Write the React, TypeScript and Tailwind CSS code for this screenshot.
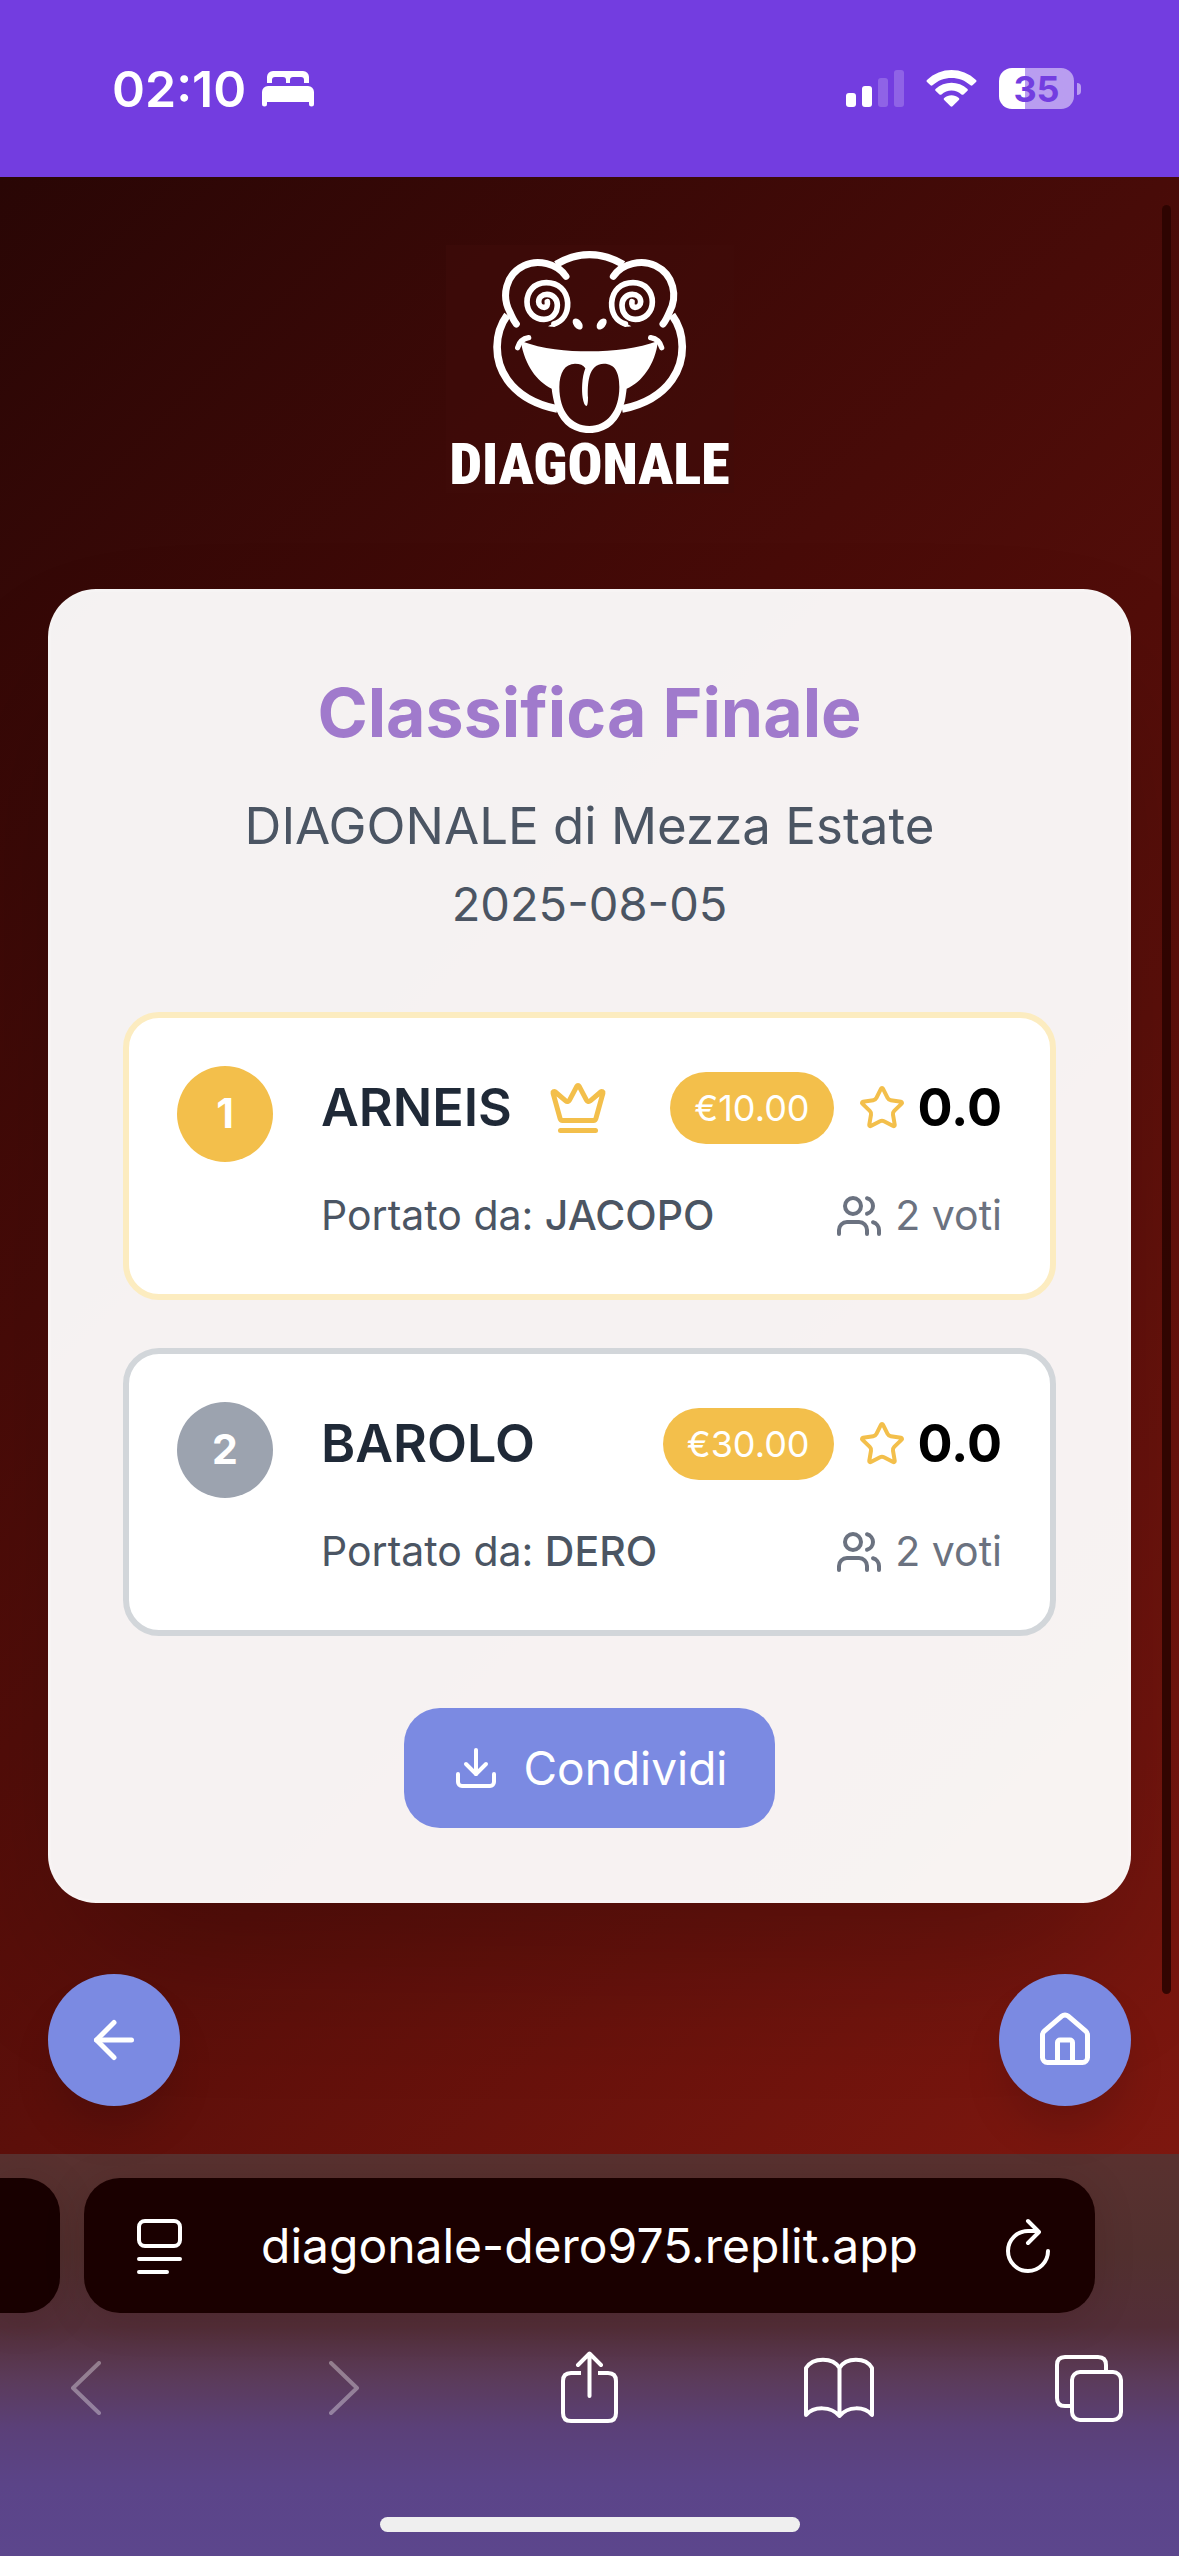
import React from "react";
import { ArrowLeft, Crown, Download, House, Star, Users } from "lucide-react";

type Entry = {
  rank: number;
  name: string;
  owner: string;
  price: string;
  score: string;
  votes: number;
  winner: boolean;
};

const entries: Entry[] = [
  { rank: 1, name: "ARNEIS", owner: "JACOPO", price: "€10.00", score: "0.0", votes: 2, winner: true },
  { rank: 2, name: "BAROLO", owner: "DERO", price: "€30.00", score: "0.0", votes: 2, winner: false },
];

function StatusBar() {
  return (
    <header className="flex h-[177px] shrink-0 items-center justify-between bg-[#733de0] pr-[98px] pl-28 text-white">
      <div className="flex items-center gap-4">
        <time className="text-[50px] leading-[60px] font-semibold">02:10</time>
        <svg className="h-9 w-13" viewBox="0 0 52 36" fill="currentColor" aria-label="Sonno">
          <path d="M5 12V6a6 6 0 0 1 6-6h30a6 6 0 0 1 6 6v6h-5V9a3 3 0 0 0-3-3H31a3 3 0 0 0-3 3v3h-4V9a3 3 0 0 0-3-3h-8a3 3 0 0 0-3 3v3z" />
          <path d="M0 33V21a6 6 0 0 1 6-6h40a6 6 0 0 1 6 6v12a2 2 0 0 1-5 0v-2H5v2a2 2 0 0 1-5 0z" />
        </svg>
      </div>
      <div className="flex items-center gap-[22px]">
        <svg className="h-[37px] w-[58px]" viewBox="0 0 58 37" fill="currentColor" aria-label="Segnale">
          <rect x="0" y="23" width="10" height="14" rx="3" />
          <rect x="16" y="16" width="10" height="21" rx="3" />
          <rect x="32" y="8" width="10" height="29" rx="3" opacity=".2" />
          <rect x="48" y="0" width="10" height="37" rx="3" opacity=".2" />
        </svg>
        <svg className="h-[37px] w-[51px]" viewBox="0 0 51 37" fill="currentColor" aria-label="Wi-Fi">
          <path d="M1 10C15-3.300 36-3.300 50 10Q51 11 50 12L46.500 15.300Q45.500 16 44.500 15.300C34 5.500 17 5.500 6.500 15.300Q5.500 16 4.500 15.300L1 12Q0 11 1 10Z" />
          <path d="M9.500 19C18.500 10.700 32.500 10.700 41.500 19Q42.300 20 41.500 20.800L37.500 24.500Q36.500 25.200 35.500 24.500C30 19.300 21 19.300 15.500 24.500Q14.500 25.200 13.500 24.500L9.500 20.800Q8.700 20 9.500 19Z" />
          <path d="M18.200 28C22.500 24.300 28.500 24.300 32.800 28Q33.800 29 32.800 30L26.500 36.300Q25.500 37.200 24.500 36.300L18.200 30Q17.200 29 18.200 28Z" />
        </svg>
        <div className="flex items-center gap-[3px]">
          <div className="flex h-[41px] w-[75px] items-center justify-center rounded-[13px] bg-linear-to-r from-white from-35% to-[#b99df0] to-35% text-[36px] leading-none font-bold text-[#733de0]">
            35
          </div>
          <div className="h-3 w-1 rounded-r-full bg-[#b99df0]" />
        </div>
      </div>
    </header>
  );
}

function FrogHalf() {
  return (
    <>
      <g fill="none" stroke="currentColor" strokeLinecap="round">
        <path d="M408 136C382 97 322 84 282 104C226 131 214 196 240 244Q250 268 259 279" strokeWidth="21" />
        <path d="M232 252C192 306 190 388 232 446C266 494 322 522 382 534" strokeWidth="23" strokeLinecap="butt" />
        <path
          d="M372 279C400 270 414 246 413 215C410 178 385 155 349 155C312 155 291 182 291 213C291 243 313 265 342 265C367 265 382 246 382 222C382 204 369 190 351 190C336 190 326 200 326 212C326 222 334 229 343 229C350 229 354 222 352 212"
          strokeWidth="17"
        />
        <path d="M263 350Q270 324 296 320" strokeWidth="16" />
      </g>
      <path d="M354 286Q372 278 384 266L392 276Q376 290 354 286Z" fill="currentColor" />
      <ellipse cx="443" cy="279" rx="12" ry="19" transform="rotate(-38 443 279)" fill="currentColor" />
    </>
  );
}

function Logo() {
  return (
    <div className="mx-auto flex h-[248px] w-72 flex-col items-center bg-[#400c09]/50 text-white">
      <svg className="w-full" viewBox="48 42 864 570" aria-hidden="true">
        <path d="M378 100Q478 42 580 100" fill="none" stroke="currentColor" strokeWidth="22" />
        <FrogHalf />
        <g transform="matrix(-1 0 0 1 958 0)">
          <FrogHalf />
        </g>
        <path
          fill="currentColor"
          fillRule="evenodd"
          d="M272 330C340 355 410 361 478 361C550 361 625 352 684 330C676 400 635 455 590 473C587 498 585 512 580 525C565 575 530 606 478 606C425 606 390 575 375 525C370 505 367 490 365 473C320 450 285 405 272 330ZM388 468C388 425 405 398 435 398C450 398 460 402 466 412C455 440 455 480 458 500Q462 525 470 525Q474 520 474 500C472 460 474 398 522 398C555 398 568 425 568 468C568 540 530 585 478 585C425 585 388 540 388 468Z"
        />
      </svg>
      <span className="font-['Roboto_Condensed','Liberation_Sans_Narrow',Roboto,sans-serif] text-[58px] leading-[58px] font-black">
        DIAGONALE
      </span>
    </div>
  );
}

function EntryCard({ entry }: { entry: Entry }) {
  return (
    <li
      className={`flex items-start gap-12 rounded-[36px] border-6 bg-white p-12 ${
        entry.winner ? "border-[#fcecc0]" : "border-[#d2d6da]"
      }`}
    >
      <div
        className={`flex size-24 shrink-0 items-center justify-center rounded-full text-[41px] font-bold text-white ${
          entry.winner ? "bg-[#f3bf4b]" : "bg-[#9ca3af]"
        }`}
      >
        {entry.rank}
      </div>
      <div className="flex min-w-0 flex-1 flex-col gap-9">
        <div className="flex h-[84px] items-center justify-between">
          <div className="flex items-center gap-9">
            <h3 className="text-[52px] font-semibold text-[#1f2937]">{entry.name}</h3>
            {entry.winner && <Crown className="size-15 text-[#f3bf4b]" />}
          </div>
          <div className="flex items-center gap-6">
            <span className="rounded-full bg-[#f3bf4b] px-6 text-[36px] leading-[72px] text-white">{entry.price}</span>
            <div className="flex items-center gap-3">
              <Star className="size-12 text-[#f3bf4b]" />
              <span className="text-[52px] font-bold text-black">{entry.score}</span>
            </div>
          </div>
        </div>
        <div className="flex h-15 items-center justify-between text-[41px] text-[#4b5563]">
          <p>
            Portato da: <span className="font-medium">{entry.owner}</span>
          </p>
          <div className="flex items-center gap-3 text-[#6b7280]">
            <Users className="size-12" />
            <span>{entry.votes} voti</span>
          </div>
        </div>
      </div>
    </li>
  );
}

const roundButton =
  "flex size-[132px] items-center justify-center rounded-full bg-[#7b8ae2] text-white shadow-[0_30px_45px_-9px_rgba(0,0,0,0.15)]";

const toolButton = "size-18";

function BrowserBar() {
  const line = {
    className: "size-full",
    viewBox: "0 0 72 72",
    fill: "none",
    stroke: "currentColor",
    strokeWidth: 4,
    strokeLinecap: "round" as const,
    strokeLinejoin: "round" as const,
  };
  return (
    <footer className="flex shrink-0 flex-col bg-[linear-gradient(180deg,#59312f_0%,#52302f_25%,#532e38_43%,#5b3b5a_56%,#5b4078_68%,#5b4488_82%,#5c468d_100%)] pt-6 pb-6 text-white">
      <div className="flex h-[135px] gap-6 pr-[84px]">
        <div className="w-15 rounded-r-[36px] bg-[#180000] shadow-[0_6px_40px_rgba(40,0,10,0.15)]" />
        <div className="flex flex-1 items-center justify-between rounded-[36px] bg-[#1a0000] pr-[43px] pl-[52px] shadow-[0_6px_40px_rgba(40,0,10,0.15)]">
          <button aria-label="Opzioni pagina">
            <svg className="h-14 w-12" viewBox="0 0 48 56" fill="none" stroke="currentColor" strokeWidth="4" strokeLinecap="round">
              <rect x="3" y="3" width="41" height="25" rx="6" />
              <path d="M3 41H44M3 54H31" />
            </svg>
          </button>
          <input
            className="w-0 flex-1 bg-transparent text-center text-[48px] leading-[60px] outline-none"
            type="text"
            aria-label="Indirizzo"
            defaultValue="diagonale-dero975.replit.app"
          />
          <button aria-label="Ricarica">
            <svg className="h-14 w-[57px]" viewBox="-9 0 57 56" fill="none" stroke="currentColor" strokeWidth="4" strokeLinecap="round" strokeLinejoin="round">
              <path d="M44 33A20 20 0 1 1 24 13H34M24 3L35 14L24 25" />
            </svg>
          </button>
        </div>
      </div>
      <nav className="mt-[38px] flex justify-between pr-[55px] pl-[50px]">
        <button className={`${toolButton} opacity-35`} aria-label="Indietro" disabled>
          <svg {...line}>
            <path d="M49 12L23 37L49 62" />
          </svg>
        </button>
        <button className={`${toolButton} opacity-35`} aria-label="Avanti" disabled>
          <svg {...line}>
            <path d="M30 12L56 37L30 62" />
          </svg>
        </button>
        <button className={toolButton} aria-label="Condividi pagina">
          <svg {...line}>
            <path d="M38.500 45V3M27 14L38.500 2.500L50 14" />
            <path d="M30 22H20Q12 22 12 30V62Q12 70 20 70H57Q65 70 65 62V30Q65 22 57 22H47" strokeLinecap="butt" />
          </svg>
        </button>
        <button className={toolButton} aria-label="Preferiti">
          <svg {...line}>
            <path d="M37.500 17C31 6 11 6 4 17V64C12 55 29 55 37.500 65C46 55 62 55 70 64V17C64 6 44 6 37.500 17V65" />
          </svg>
        </button>
        <button className={toolButton} aria-label="Pannelli">
          <svg {...line}>
            <path d="M18 55H13Q5 55 5 47V14Q5 6 13 6H46Q54 6 54 14V20" strokeLinecap="butt" />
            <rect x="20" y="21" width="49" height="48" rx="8" />
          </svg>
        </button>
      </nav>
      <div className="mx-auto mt-[94px] h-[15px] w-[420px] rounded-full bg-[#efefef]" />
    </footer>
  );
}

export default function App() {
  return (
    <div className="flex min-h-screen flex-col font-[Inter,'Open_Sans',sans-serif]">
      <StatusBar />
      <main className="relative flex flex-1 flex-col bg-[linear-gradient(135deg,#290605_0%,#480b08_37%,#5c0f0a_63%,#7d170f_100%)] px-12 pt-[68px] pb-12">
        <Logo />
        <section className="mt-24 rounded-[48px] border-3 border-white/20 bg-white/95 p-18 shadow-[0_75px_150px_-36px_rgba(0,0,0,0.25)]">
          <div className="text-center text-[#4b5563]">
            <h1 className="text-[68px] leading-24 font-bold text-[#a07acc]">Classifica Finale</h1>
            <h2 className="mt-6 text-[51px] leading-[84px]">DIAGONALE di Mezza Estate</h2>
            <p className="text-[47px] leading-18">2025-08-05</p>
          </div>
          <ol className="mt-18 flex flex-col gap-12">
            {entries.map((entry) => (
              <EntryCard key={entry.rank} entry={entry} />
            ))}
          </ol>
          <button className="mx-auto mt-18 flex h-[120px] items-center gap-6 rounded-[36px] bg-[#7b8ae2] px-12 text-[46px] text-white">
            <Download className="size-12" />
            Condividi
          </button>
        </section>
        <nav className="mt-auto flex justify-between pt-[71px]">
          <button className={roundButton} aria-label="Indietro">
            <ArrowLeft className="size-15" />
          </button>
          <button className={roundButton} aria-label="Home">
            <House className="size-15" />
          </button>
        </nav>
        <div className="absolute top-7 right-2 bottom-40 w-[9px] rounded-full bg-[#2b0300]/90" />
      </main>
      <BrowserBar />
    </div>
  );
}
